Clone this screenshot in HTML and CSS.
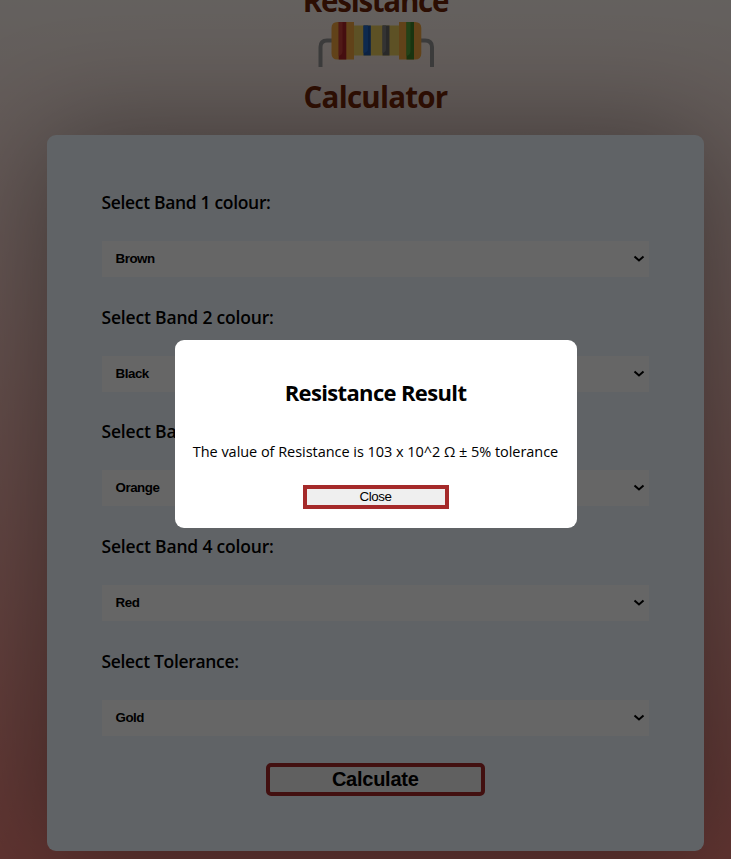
FILE: index.html
```html
<!DOCTYPE html>
<html lang="en">
<head>
<meta charset="utf-8">
<title>Resistance Calculator</title>
<link rel="stylesheet" href="styles.css">
</head>
<body>
<header class="heading">
  <h1 class="title title-top"><span>Resistance</span></h1>
  <svg class="resistor" viewBox="0 0 118 48" width="118" height="48">
    <path d="M15 19.5H10Q3.5 19.5 3.5 26V46M103 19.5H108Q115 19.5 115 26V46" fill="none" stroke="#949494" stroke-width="4"/>
    <path d="M33 4.5H84V34.5H33Z" fill="#e8cb5e"/>
    <path d="M20.5 1H37V38.5H20.5Q14.5 38.5 14.5 32.5V7Q14.5 1 20.5 1ZM82 1H98Q104.3 1 104.3 7V32.5Q104.3 38.5 98 38.5H82Z" fill="#f2a540"/>
    <path d="M21.7 1H29.3V38.5H21.7Z" fill="#ad2328"/><path d="M21.7 1H25.5V30Q25.5 34 21.7 35Z" fill="#c9403b"/>
    <path d="M46.5 4.5H53.8V34.5H46.5Z" fill="#1d56a8"/><path d="M46.5 4.5H51V28Q51 31 46.5 32Z" fill="#2469c6"/>
    <path d="M65.5 4.5H72.5V34.5H65.5Z" fill="#666"/><path d="M65.5 4.5H69V28Q69 31 65.5 32Z" fill="#808080"/>
    <path d="M89.5 1H97V38.5H89.5Z" fill="#3f8229"/><path d="M89.5 1H93.5V30Q93.5 34 89.5 35Z" fill="#57a63c"/>
  </svg>
  <h1 class="title title-bottom"><span>Calculator</span></h1>
</header>
<main class="card">
  <div class="field"><label class="label"><span>Select Band 1 colour:</span></label><div class="select">Brown<svg class="chevron" viewBox="0 0 12 8"><path d="M1.5 1.5L6 5.5L10.5 1.5"/></svg></div></div>
  <div class="field"><label class="label wide"><span>Select Band 2 colour:</span></label><div class="select">Black<svg class="chevron" viewBox="0 0 12 8"><path d="M1.5 1.5L6 5.5L10.5 1.5"/></svg></div></div>
  <div class="field"><label class="label wide"><span>Select Band 3 colour:</span></label><div class="select">Orange<svg class="chevron" viewBox="0 0 12 8"><path d="M1.5 1.5L6 5.5L10.5 1.5"/></svg></div></div>
  <div class="field"><label class="label wide"><span>Select Band 4 colour:</span></label><div class="select">Red<svg class="chevron" viewBox="0 0 12 8"><path d="M1.5 1.5L6 5.5L10.5 1.5"/></svg></div></div>
  <div class="field"><label class="label"><span>Select Tolerance:</span></label><div class="select">Gold<svg class="chevron" viewBox="0 0 12 8"><path d="M1.5 1.5L6 5.5L10.5 1.5"/></svg></div></div>
  <button class="calculate">Calculate</button>
</main>
<div class="overlay">
  <section class="dialog">
    <h2 class="dialog-title">Resistance Result</h2>
    <p class="dialog-text">The value of Resistance is 103 x 10^2 Ω ± 5% tolerance</p>
    <button class="close">Close</button>
  </section>
</div>
</body>
</html>
```
FILE: styles.css
```css
* { box-sizing: border-box; }
html, body { height: 859px; margin: 0; overflow: hidden; }
body {
  font-family: "Segoe UI", "Open Sans", "Noto Sans", sans-serif;
  color: #000;
  background: linear-gradient(#faf2ec, #ee827a);
}
.heading { height: 135px; padding-left: 20px; display: flex; flex-direction: column; align-items: center; }
.title { margin: 0; font-size: 29.5px; line-height: 40px; font-weight: 700; color: #6e2306; white-space: nowrap; }
.title-top { margin-top: -19px; letter-spacing: -1.25px; }
.title-bottom { margin-top: 8px; letter-spacing: -0.75px; }
.resistor { display: block; flex: none; }
.card {
  width: 657px; height: 716px; margin-left: 47px; padding: 52px 55px 0 54.5px;
  border-radius: 9px; background: aliceblue; box-shadow: 0 0 110px rgba(0, 0, 0, 0.35);
  display: flex; flex-direction: column;
}
.field { height: 114.7px; flex: none; }
.label {
  display: block; height: 54px; line-height: 30px; font-size: 17.5px; font-weight: 600;
  letter-spacing: -0.33px; white-space: nowrap;
}
.wide { letter-spacing: -0.18px; }
.select {
  height: 36px; padding: 0 4px 1px 14px; display: flex; align-items: center; justify-content: space-between;
  background: #fff; font: bold 13.33px "Liberation Sans", sans-serif; letter-spacing: -0.45px;
}
.chevron { width: 12px; height: 8px; margin-top: 1px; fill: none; stroke: #000; stroke-width: 2; }
.calculate {
  width: 219px; height: 33px; margin: 2.5px 0 0; align-self: center; padding: 0;
  border: 4px solid brown; border-radius: 5px; background: #efefef; color: #000;
  font: bold 20px "Liberation Sans", sans-serif; line-height: 24px; letter-spacing: -0.25px;
}
.overlay {
  position: fixed; inset: 0; background: rgba(0, 0, 0, 0.6);
}
.dialog {
  width: 402px; height: 188px; margin: 340px 0 0 174.5px; border-radius: 9px; background: #fff;
  display: flex; flex-direction: column; align-items: center;
}
.dialog-title { margin: 37px 0 0; font-size: 22px; line-height: 30px; letter-spacing: -0.65px; white-space: nowrap; }
.dialog-text { margin: 33px 0 0; font-size: 14.5px; line-height: 24px; letter-spacing: -0.04px; white-space: nowrap; }
.close {
  width: 146px; height: 24px; margin-top: 21px; padding: 0 0 1px; border: 4px solid brown; background: #efefef;
  color: #000; font: 13.33px/15px "Liberation Sans", sans-serif; letter-spacing: -0.4px;
}
```
